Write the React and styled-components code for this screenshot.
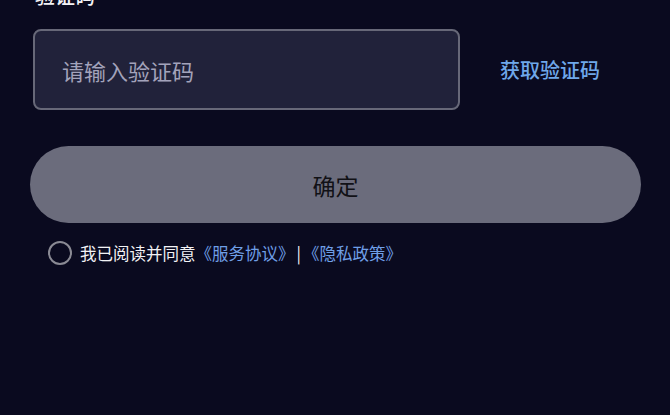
import React from "react";
import styled, { createGlobalStyle } from "styled-components";

const Global = createGlobalStyle`
  html, body { margin: 0; padding: 0; background: #0a0a1f; }
  body { font-family: "Noto Sans CJK SC", "Noto Sans", sans-serif; overflow: hidden; }
`;

const Page = styled.div`
  width: 670px;
  height: 415px;
  background: #0a0a1f;
  overflow: hidden;
  box-sizing: border-box;
  padding: 0 29px 0 30px;
`;

const Label = styled.div`
  margin: -19px 0 0 5px;
  height: 30px;
  font-size: 20px;
  line-height: 30px;
  color: #f2f2f5;
  font-weight: 500;
`;

const Row = styled.div`
  display: flex;
  align-items: center;
  margin-top: 18px;
  padding-left: 3px;
`;

const Input = styled.input`
  width: 427px;
  height: 81px;
  box-sizing: border-box;
  border: 2px solid #676878;
  border-radius: 8px;
  background: #21223a;
  padding: 0 0 0 27px;
  font-family: inherit;
  font-size: 22px;
  color: #fff;
  outline: none;
  &::placeholder { color: #a3a3bb; }
`;

const Link = styled.span`
  margin-left: 40px;
  font-size: 20px;
  font-weight: 500;
  color: #6fa8ea;
`;

const Button = styled.button`
  display: block;
  margin-top: 36px;
  width: 611px;
  height: 77px;
  border: none;
  border-radius: 39px;
  background: #6b6c7c;
  font-family: inherit;
  font-size: 23px;
  color: #111116;
`;

const Agree = styled.div`
  display: flex;
  align-items: center;
  margin: 18px 0 0 18px;
  font-size: 16.5px;
  color: #f2f2f5;
`;

const Circle = styled.span`
  width: 20px;
  height: 20px;
  border-radius: 50%;
  border: 2px solid #8a8a94;
  margin-right: 8px;
`;

const Blue = styled.span`
  color: #6f9fe6;
`;

const Sep = styled.span`
  margin: 0 2px;
`;

export default function App() {
  return (
    <>
      <Global />
      <Page>
        <Label>验证码</Label>
        <Row>
          <Input placeholder="请输入验证码" />
          <Link>获取验证码</Link>
        </Row>
        <Button>确定</Button>
        <Agree>
          <Circle />
          我已阅读并同意<Blue>《服务协议》</Blue><Sep>|</Sep><Blue>《隐私政策》</Blue>
        </Agree>
      </Page>
    </>
  );
}
